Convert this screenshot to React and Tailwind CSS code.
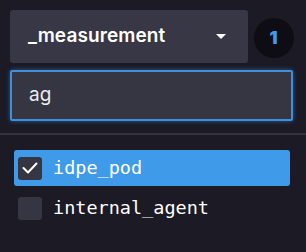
import React, { useState } from 'react';

const sans = { fontFamily: 'Inter, "Noto Sans", sans-serif' };

export default function App() {
  const [query, setQuery] = useState('ag');
  const [selected, setSelected] = useState(['idpe_pod']);
  const items = ['idpe_pod', 'internal_agent'];

  const toggle = (name) =>
    setSelected((s) => (s.includes(name) ? s.filter((x) => x !== name) : [...s, name]));

  return (
    <div className="w-[306px] h-[252px] bg-[#1b1a25] overflow-hidden" style={sans}>
      <div className="pt-[10px] px-[10px]">
        {/* measurement selector + count badge */}
        <div className="flex items-center gap-[6px]">
          <button className="w-[238px] h-[53px] bg-[#383745] rounded-[3px] flex items-center justify-between pl-[18px] pr-[22px]">
            <span className="text-white text-[19px] font-semibold tracking-[0.1px]">_measurement</span>
            <svg width="10" height="5" viewBox="0 0 10 5">
              <path d="M0 0 L10 0 L5 5 Z" fill="#ffffff" />
            </svg>
          </button>
          <div className="w-10 h-10 rounded-full bg-[#0e0d14] flex items-center justify-center mt-[3px]">
            <span className="text-[#3f9bf0] text-[18px] leading-none font-black pr-[1px]">1</span>
          </div>
        </div>

        {/* search */}
        <div className="mt-[7px] w-[283px] h-[51px] bg-[#363542] rounded-[2px] border-2 border-[#3e8fdc] shadow-[0_0_5px_rgba(62,143,220,0.55)] flex items-center pl-[17px] pr-[19px]">
          <input
            value={query}
            onChange={(e) => setQuery(e.target.value)}
            className="flex-1 bg-transparent outline-none text-[#ececf1] text-[19px]"
            style={sans}
          />
          <button onClick={() => setQuery('')}>
            <svg width="14" height="14" viewBox="0 0 14 14">
              <path d="M1 1 L13 13 M13 1 L1 13" stroke="#b4b3bc" strokeWidth="1.8" strokeLinecap="round" />
            </svg>
          </button>
        </div>
      </div>

      <div className="mt-[12px] h-[2px] bg-[#33323e]" />

      {/* results */}
      <div className="pt-[15px] px-[14px] flex flex-col gap-[4px]">
        {items.map((name) => {
          const on = selected.includes(name);
          return (
            <div
              key={name}
              onClick={() => toggle(name)}
              className={`w-[276px] h-[36px] rounded-[3px] flex items-center gap-[11px] pl-[4px] cursor-pointer ${
                on ? 'bg-[#3f9be9]' : ''
              }`}
            >
              <div className="w-[24px] h-[23px] rounded-[3px] bg-[#363542] flex items-center justify-center">
                {on && (
                  <svg width="16" height="12" viewBox="0 0 16 12">
                    <path d="M1.5 6 L6 10.5 L14.5 1.5" fill="none" stroke="#ffffff" strokeWidth="2" strokeLinecap="round" strokeLinejoin="round" />
                  </svg>
                )}
              </div>
              <span
                className="text-white text-[18.5px]"
                style={{ fontFamily: '"DejaVu Sans Mono", "Liberation Mono", monospace' }}
              >
                {name}
              </span>
            </div>
          );
        })}
      </div>
    </div>
  );
}
